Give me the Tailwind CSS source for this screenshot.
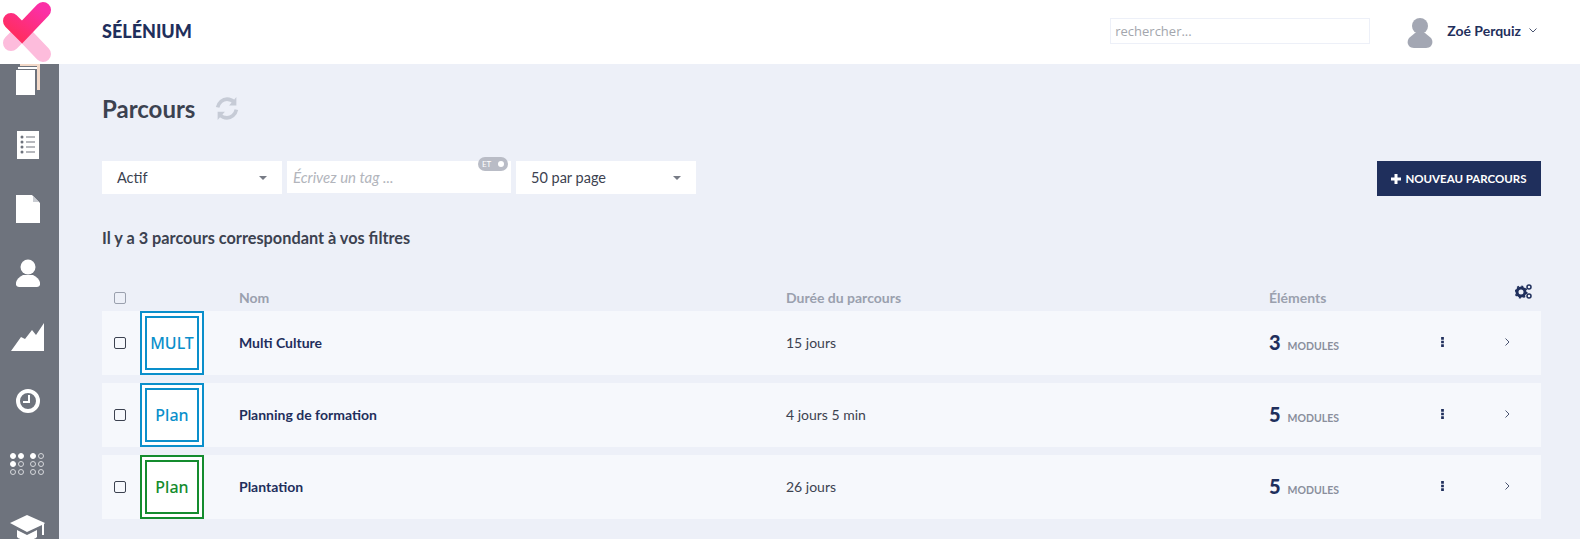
<!DOCTYPE html>
<html lang="fr">
<head>
    <meta charset="UTF-8">
    <meta name="viewport" content="width=device-width, initial-scale=1.0">
    <title>Parcours</title>
    <script src="https://cdn.jsdelivr.net/npm/@tailwindcss/browser@4"></script>
</head>
<body class="h-[539px] overflow-hidden bg-[#edf0f8] font-['Lato',sans-serif] text-[#3c4250]">
    <!-- header -->
    <header class="relative z-10 flex h-16 items-center bg-white">
        <div class="w-[102px] h-16 shrink-0">
            <svg class="w-[60px] h-16" viewBox="0 0 60 64">
                <defs>
                    <linearGradient id="logoGrad" x1="0" y1="1" x2="1" y2="0">
                        <stop offset="0" stop-color="#ff2d62"/>
                        <stop offset="1" stop-color="#fb2fa6"/>
                    </linearGradient>
                </defs>
                <path d="M11 43 L22 32 M22 32 L43 54" fill="none" stroke="#fdbcdc" stroke-width="16" stroke-linecap="round"/>
                <path d="M11 21 L22 32 L43 10" fill="none" stroke="url(#logoGrad)" stroke-width="16" stroke-linecap="round" stroke-linejoin="miter"/>
            </svg>
        </div>
        <div class="text-[18px] font-black text-[#1f2f5c] -mt-[1px]">SÉLÉNIUM</div>
        <div class="ml-auto flex items-center">
            <input type="text" placeholder="rechercher..." class="w-[260px] h-[26px] -mt-[2px] border border-[#edf0f8] px-[4px] text-[13px] font-['Open_Sans',sans-serif] placeholder:text-[#a3a6ad]">
            <svg class="ml-[37px] w-[26px] h-[30px] mt-[2px]" viewBox="0 0 26 30" fill="#a3a7b3">
                <circle cx="13" cy="8" r="8"/>
                <path d="M8 15 L18 15 L24 20 C27 24 25 30 19 30 L7 30 C1 30 -1 24 2 20 Z"/>
            </svg>
            <span class="ml-[14px] -mt-[3px] text-[14px] font-bold text-[#1f2f5c]">Zoé Perquiz</span>
            <svg class="ml-[8px] mr-[43px] -mt-[3px] w-[8px] h-[5px]" viewBox="0 0 8 5" fill="none" stroke="#4a5470" stroke-width="1"><path d="M0.5 0.5 L4 4 L7.500 0.5"/></svg>
        </div>
    </header>

    <div class="flex h-[475px]">
        <!-- sidebar -->
        <nav class="w-[59px] shrink-0 bg-[#6e737d] overflow-hidden flex flex-col items-center pr-[4px]">
            <div class="h-[49px] w-full shrink-0 flex justify-center">
                <svg class="w-6 h-[31px]" viewBox="0 0 24 31"><path d="M4 0 H24 V26 H21 V2 H4 Z" fill="#f3d9c8"/><path d="M0 6 H19 V31 H0 Z" fill="#fff"/><path d="M2 3 H21 V5 H2 Z" fill="#fff"/></svg>
            </div>
            <div class="h-[64px] w-full shrink-0 flex items-center justify-center">
                <svg class="w-[22px] h-[28px]" viewBox="0 0 22 28"><path d="M0 0 H22 V28 H0 Z" fill="#fff"/><g fill="#6e737d"><circle cx="5" cy="6" r="1.500"/><circle cx="5" cy="11" r="1.500"/><circle cx="5" cy="16" r="1.500"/><circle cx="5" cy="21" r="1.500"/><path d="M9 5.500 H18 V6.500 H9 Z M9 10.500 H18 V11.500 H9 Z M9 15.500 H18 V16.500 H9 Z M9 20.500 H18 V21.500 H9 Z"/></g></svg>
            </div>
            <div class="h-[64px] w-full shrink-0 flex items-center justify-center">
                <svg class="w-6 h-7" viewBox="0 0 24 28"><path d="M0 0 H16 L24 8 V28 H0 Z" fill="#fff"/><path d="M17 1 L23 7 H17 Z" fill="#c9ccd2"/></svg>
            </div>
            <div class="h-[64px] w-full shrink-0 flex items-center justify-center">
                <svg class="w-6 h-7" viewBox="0 0 24 28" fill="#fff"><circle cx="12" cy="8" r="7.500"/><path d="M7 16 H17 C22 18 25 23 24 26 C23 28 21 28 20 28 H4 C3 28 1 28 0 26 C-1 23 2 18 7 16 Z"/></svg>
            </div>
            <div class="h-[64px] w-full shrink-0 flex items-center justify-center">
                <svg class="w-[34px] h-7" viewBox="0 0 34 28" fill="#fff"><path d="M0 28 L10 14 L14 16 L21 7 L25 12 L33 0 V28 Z"/></svg>
            </div>
            <div class="h-[63px] w-full shrink-0 flex items-center justify-center">
                <svg class="w-6 h-6" viewBox="0 0 24 24" fill="none" stroke="#fff"><circle cx="12" cy="12" r="10" stroke-width="4"/><path d="M13 6 V13 H7" stroke-width="2"/></svg>
            </div>
            <div class="h-[64px] w-full shrink-0 flex items-center justify-center">
                <svg class="w-[35px] h-[22px]" viewBox="0 0 35 22" fill="none" stroke="#d5d7db" stroke-width="1">
                    <g fill="#fff" stroke="#fff"><circle cx="3" cy="3" r="2.500"/><circle cx="11" cy="3" r="2.500"/><circle cx="3" cy="11" r="2.500"/><circle cx="23" cy="3" r="2.500"/></g>
                    <circle cx="31" cy="3" r="2.500"/><circle cx="11" cy="11" r="2.500"/><circle cx="23" cy="11" r="2.500"/><circle cx="31" cy="11" r="2.500"/>
                    <circle cx="3" cy="19" r="2.500"/><circle cx="11" cy="19" r="2.500"/><circle cx="23" cy="19" r="2.500"/><circle cx="31" cy="19" r="2.500"/>
                </svg>
            </div>
            <div class="h-[64px] w-full shrink-0 flex items-center justify-center">
                <svg class="w-[35px] h-7 mt-[2px]" viewBox="0 0 35 28" fill="#fff"><path d="M17 0 L35 8 L34 9 V20 H32 V10 L17 17 L0 8 Z"/><path d="M7 15 L17 20 L27 15 V22 C24 26 10 26 7 22 Z"/></svg>
            </div>
        </nav>

        <main class="flex-1 pl-[43px] pr-[39px]">
            <div class="flex items-center h-[30px] mt-[30px]">
                <h1 class="text-[24px] font-bold text-[#3c4250]">Parcours</h1>
                <svg class="ml-[18px] -mt-[2px] w-[28px] h-[25px]" viewBox="0 0 24 24" fill="none" stroke="#c6cbd6" stroke-width="3.500">
                    <path d="M3 11 C4 6 8 3 12 3 C15 3 17 4 19 6"/>
                    <path d="M21 13 C20 18 16 21 12 21 C9 21 7 20 5 18"/>
                    <path d="M21 1 V9 H14 Z M3 23 V15 H10 Z" fill="#c6cbd6" stroke="none"/>
                </svg>
            </div>

            <!-- filters -->
            <div class="flex mt-[37px] h-[35px] items-start">
                <div class="flex items-center justify-between w-[180px] h-[33px] bg-white pl-[15px] pr-[15px] text-[14.500px]">
                    <span>Actif</span>
                    <span class="w-0 h-0 border-x-[4px] border-x-transparent border-t-[4px] border-t-[#777b85]"></span>
                </div>
                <div class="relative flex items-center w-[224px] h-[32px] bg-white ml-[5px] pl-[6px] text-[15px] italic text-[#b2b5bc]">
                    Écrivez un tag ...
                    <span class="absolute -top-[4px] right-[3px] flex items-center justify-between w-[30px] h-[14px] rounded-full bg-[#b9bcc6] px-[4px] not-italic text-[8px] text-white">ET<span class="w-[6px] h-[6px] rounded-full bg-white"></span></span>
                </div>
                <div class="flex items-center justify-between w-[180px] h-[33px] bg-white ml-[5px] pl-[15px] pr-[15px] text-[14.500px]">
                    <span>50 par page</span>
                    <span class="w-0 h-0 border-x-[4px] border-x-transparent border-t-[4px] border-t-[#777b85]"></span>
                </div>
                <button class="ml-auto flex items-center justify-center gap-[4px] w-[164px] h-[35px] bg-[#1f2f5c] text-[11.500px] font-bold text-white">
                    <svg class="w-[10px] h-[10px]" viewBox="0 0 10 10" fill="#fff"><path d="M3.500 0 H6.500 V3.500 H10 V6.500 H6.500 V10 H3.500 V6.500 H0 V3.500 H3.500 Z"/></svg>
                    NOUVEAU PARCOURS
                </button>
            </div>

            <p class="mt-[32px] text-[16.300px] font-bold leading-5">Il y a 3 parcours correspondant à vos filtres</p>

            <!-- table -->
            <div class="mt-[36px] grid grid-cols-[26px_99px_547px_483px_172px_64px_1fr] h-[27px] items-center pl-3 text-[14px] font-bold text-[#9aa0ae]">
                <input type="checkbox" class="appearance-none w-3 h-3 rounded-[2px] border border-[#9aa0ae]">
                <span></span>
                <span class="-mt-[1px]">Nom</span>
                <span class="-mt-[1px]">Durée du parcours</span>
                <span class="-mt-[1px]">Éléments</span>
                <span></span>
                <span class="flex justify-end pr-[9px] -mt-[13px]">
                    <svg class="w-[17px] h-[15px]" viewBox="0 0 17 15" fill="#1f2f5c">
                        <circle cx="6" cy="8" r="4" fill="none" stroke="#1f2f5c" stroke-width="3"/>
                        <circle cx="6" cy="8" r="5.800" fill="none" stroke="#1f2f5c" stroke-width="1.500" stroke-dasharray="2 2.500"/>
                        <circle cx="14" cy="3" r="2" fill="none" stroke="#1f2f5c" stroke-width="1.500"/>
                        <circle cx="14" cy="12" r="2" fill="none" stroke="#1f2f5c" stroke-width="1.500"/>
                    </svg>
                </span>
            </div>

            <div class="flex flex-col gap-2">
                <div class="grid grid-cols-[26px_99px_547px_483px_172px_64px_1fr] h-16 items-center pl-3 bg-[#f6f8fc] text-[14px]">
                    <input type="checkbox" class="appearance-none w-3 h-3 rounded-[2px] border border-[#3c4250]">
                    <div class="w-16 h-16 bg-white border-2 border-[#0a8fcb] p-[3px]"><div class="flex items-center justify-center h-full border-2 border-[#0a8fcb] font-['Noto_Sans',sans-serif] font-medium text-[16px] text-[#0a8fcb]">MULT</div></div>
                    <span class="-mt-[1px] font-bold text-[#1f2f5c]">Multi Culture</span>
                    <span class="-mt-[1px]">15 jours</span>
                    <span class="-mt-[2px] flex items-baseline"><b class="text-[20px] font-black text-[#1f2f5c]">3</b><span class="ml-[7px] text-[10.500px] font-bold text-[#8a8f9c]">MODULES</span></span>
                    <svg class="w-[3px] h-[10px] -mt-[2px]" viewBox="0 0 3 11" fill="#1f2f5c"><path d="M0 0 H3 V3 H0 Z M0 4 H3 V7 H0 Z M0 8 H3 V11 H0 Z"/></svg>
                    <svg class="w-[5px] h-2 -mt-[2px]" viewBox="0 0 5 8" fill="none" stroke="#4a5470"><path d="M0.500 0.500 L4 4 L0.500 7.500"/></svg>
                </div>
                <div class="grid grid-cols-[26px_99px_547px_483px_172px_64px_1fr] h-16 items-center pl-3 bg-[#f6f8fc] text-[14px]">
                    <input type="checkbox" class="appearance-none w-3 h-3 rounded-[2px] border border-[#3c4250]">
                    <div class="w-16 h-16 bg-white border-2 border-[#0a8fcb] p-[3px]"><div class="flex items-center justify-center h-full border-2 border-[#0a8fcb] font-['Noto_Sans',sans-serif] font-medium text-[16px] text-[#0a8fcb]">Plan</div></div>
                    <span class="-mt-[1px] font-bold text-[#1f2f5c]">Planning de formation</span>
                    <span class="-mt-[1px]">4 jours 5 min</span>
                    <span class="-mt-[2px] flex items-baseline"><b class="text-[20px] font-black text-[#1f2f5c]">5</b><span class="ml-[7px] text-[10.500px] font-bold text-[#8a8f9c]">MODULES</span></span>
                    <svg class="w-[3px] h-[10px] -mt-[2px]" viewBox="0 0 3 11" fill="#1f2f5c"><path d="M0 0 H3 V3 H0 Z M0 4 H3 V7 H0 Z M0 8 H3 V11 H0 Z"/></svg>
                    <svg class="w-[5px] h-2 -mt-[2px]" viewBox="0 0 5 8" fill="none" stroke="#4a5470"><path d="M0.500 0.500 L4 4 L0.500 7.500"/></svg>
                </div>
                <div class="grid grid-cols-[26px_99px_547px_483px_172px_64px_1fr] h-16 items-center pl-3 bg-[#f6f8fc] text-[14px]">
                    <input type="checkbox" class="appearance-none w-3 h-3 rounded-[2px] border border-[#3c4250]">
                    <div class="w-16 h-16 bg-white border-2 border-[#148c2e] p-[3px]"><div class="flex items-center justify-center h-full border-2 border-[#148c2e] font-['Noto_Sans',sans-serif] font-medium text-[16px] text-[#148c2e]">Plan</div></div>
                    <span class="-mt-[1px] font-bold text-[#1f2f5c]">Plantation</span>
                    <span class="-mt-[1px]">26 jours</span>
                    <span class="-mt-[2px] flex items-baseline"><b class="text-[20px] font-black text-[#1f2f5c]">5</b><span class="ml-[7px] text-[10.500px] font-bold text-[#8a8f9c]">MODULES</span></span>
                    <svg class="w-[3px] h-[10px] -mt-[2px]" viewBox="0 0 3 11" fill="#1f2f5c"><path d="M0 0 H3 V3 H0 Z M0 4 H3 V7 H0 Z M0 8 H3 V11 H0 Z"/></svg>
                    <svg class="w-[5px] h-2 -mt-[2px]" viewBox="0 0 5 8" fill="none" stroke="#4a5470"><path d="M0.500 0.500 L4 4 L0.500 7.500"/></svg>
                </div>
            </div>
        </main>
    </div>
</body>
</html>
